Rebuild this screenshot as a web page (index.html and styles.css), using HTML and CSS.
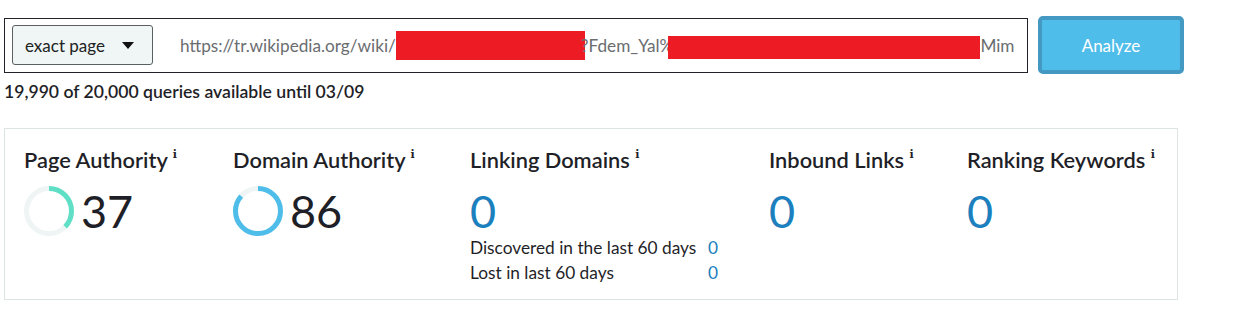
FILE: index.html
```html
<!DOCTYPE html>
<html lang="en">
<head>
    <meta charset="UTF-8">
    <title>Link Explorer</title>
    <link rel="stylesheet" href="styles.css">
</head>
<body>
    <div class="search-row">
        <div class="search-box">
            <div class="scope-select">
                <span>exact page</span>
                <span class="caret"></span>
            </div>
            <div class="url-text">https://tr.wikipedia.org/wiki/<span class="redact r1"></span>?Fdem_Yal%<span class="redact r2"></span>Mim</div>
        </div>
        <button class="analyze">Analyze</button>
    </div>
    <div class="quota">19,990 of 20,000 queries available until 03/09</div>

    <div class="metrics">
        <div class="metric col-pa">
            <div class="metric-title">Page Authority <sup>i</sup></div>
            <div class="metric-value">
                <svg class="donut" width="50" height="50" viewBox="0 0 50 50">
                    <circle cx="25" cy="25" r="22.5" fill="none" stroke="#eef5f4" stroke-width="5"/>
                    <circle cx="25" cy="25" r="22.5" fill="none" stroke="#5fe0c6" stroke-width="5"
                        stroke-dasharray="52.3 200" transform="rotate(-90 25 25)"/>
                </svg>
                <span class="num">37</span>
            </div>
        </div>
        <div class="metric col-da">
            <div class="metric-title">Domain Authority <sup>i</sup></div>
            <div class="metric-value">
                <svg class="donut" width="50" height="50" viewBox="0 0 50 50">
                    <circle cx="25" cy="25" r="22.5" fill="none" stroke="#eef5f4" stroke-width="5"/>
                    <circle cx="25" cy="25" r="22.5" fill="none" stroke="#4fbde9" stroke-width="5"
                        stroke-dasharray="121.6 200" transform="rotate(-90 25 25)"/>
                </svg>
                <span class="num">86</span>
            </div>
        </div>
        <div class="metric col-ld">
            <div class="metric-title">Linking Domains <sup>i</sup></div>
            <div class="metric-value"><span class="num blue">0</span></div>
            <div class="sub-list">
                <div class="sub-row"><span class="sub-label">Discovered in the last 60 days</span><span class="sub-num">0</span></div>
                <div class="sub-row"><span class="sub-label">Lost in last 60 days</span><span class="sub-num">0</span></div>
            </div>
        </div>
        <div class="metric col-il">
            <div class="metric-title">Inbound Links <sup>i</sup></div>
            <div class="metric-value"><span class="num blue">0</span></div>
        </div>
        <div class="metric col-rk">
            <div class="metric-title">Ranking Keywords <sup>i</sup></div>
            <div class="metric-value"><span class="num blue">0</span></div>
        </div>
    </div>
</body>
</html>
```

FILE: styles.css
```css
:root {
    --text-color: #1f1f28;
    --blue: #1b80bd;
    --light-blue: #4fbde9;
}

body {
    margin: 0;
    padding: 16px 0 0 4px;
    font-family: Lato, "Open Sans", sans-serif;
    color: var(--text-color);
    background-color: #fff;
}

.search-row {
    display: flex;
    align-items: center;
    gap: 10px;
}

.search-box {
    width: 1024px;
    height: 55px;
    border: 1px solid #22222a;
    display: flex;
    align-items: center;
    padding-left: 7px;
    box-sizing: border-box;
    overflow: hidden;
}

.scope-select {
    width: 141px;
    height: 40px;
    box-sizing: border-box;
    background-color: #eff6f5;
    border: 1px solid #5a5f62;
    border-radius: 3px;
    display: flex;
    align-items: center;
    padding-left: 12px;
    font-size: 17px;
    color: #222;
}

.caret {
    margin-left: 17px;
    width: 0;
    height: 0;
    border-left: 6px solid transparent;
    border-right: 6px solid transparent;
    border-top: 7px solid #111;
}

.url-text {
    margin-left: 27px;
    font-size: 17.2px;
    color: #6a6d70;
    white-space: nowrap;
    display: flex;
    align-items: center;
}

.redact {
    display: inline-block;
    background-color: #ed1c24;
}

.r1 {
    width: 189px;
    height: 29px;
    margin-right: -4px;
}

.r2 {
    width: 312px;
    height: 23px;
    margin-top: 4px;
    margin-left: -5px;
}

.analyze {
    width: 146px;
    height: 58px;
    background-color: var(--light-blue);
    border: 4px solid #4499c2;
    border-radius: 5px;
    color: #fff;
    font-family: Lato, sans-serif;
    font-size: 17px;
    cursor: pointer;
}

.quota {
    margin-top: 7px;
    font-size: 17.6px;
    font-weight: 600;
    color: #1f1f28;
}

.metrics {
    margin-top: 26px;
    width: 1174px;
    height: 172px;
    box-sizing: border-box;
    border: 1px solid #dde4e4;
    display: flex;
    padding: 17px 0 0 19px;
}

.col-pa { width: 209px; }
.col-da { width: 237px; }
.col-ld { width: 299px; }
.col-il { width: 198px; }

.metric-title {
    font-size: 21.8px;
    font-weight: 600;
    white-space: nowrap;
}

.metric-title sup {
    font-family: "DejaVu Serif", serif;
    font-size: 11px;
    font-weight: bold;
    vertical-align: 10px;
}

.metric-value {
    display: flex;
    align-items: center;
    height: 56px;
    margin-top: 10px;
}

.donut {
    margin-right: 7px;
}

.num {
    font-size: 45px;
    line-height: 1;
}

.num.blue {
    color: var(--blue);
}

.sub-list {
    margin-top: -4px;
}

.sub-row {
    display: flex;
    font-size: 17.3px;
    line-height: 25px;
}

.sub-label {
    width: 238px;
}

.sub-num {
    color: var(--blue);
}
```
